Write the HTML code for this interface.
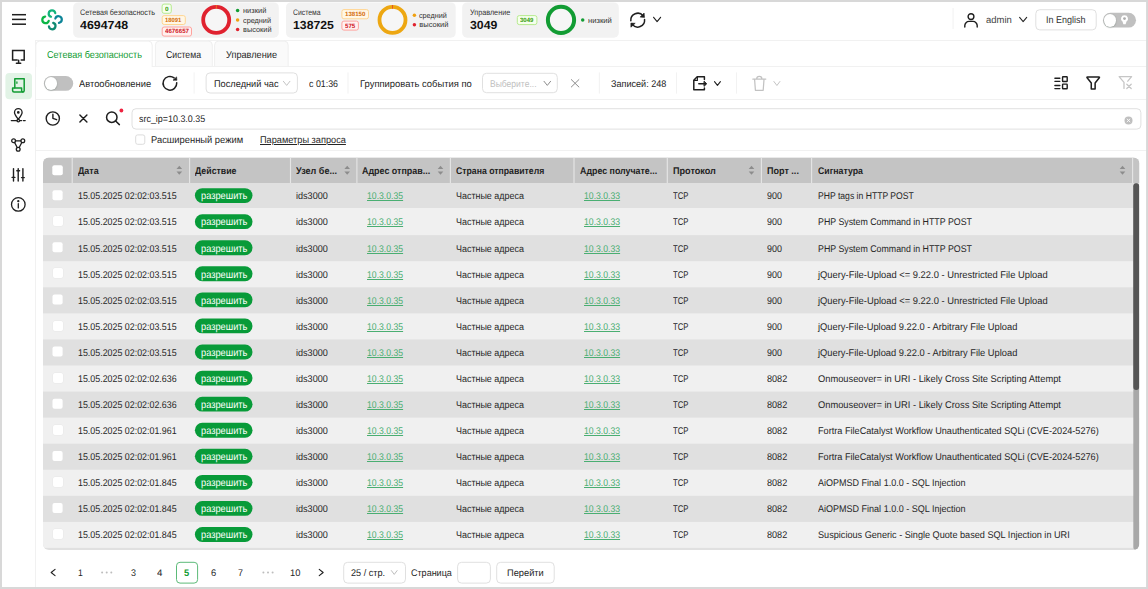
<!DOCTYPE html>
<html lang="ru"><head><meta charset="utf-8"><title>Сетевая безопасность</title>
<style>
html,body{margin:0;padding:0}
body{width:1148px;height:589px;position:relative;overflow:hidden;background:#fff;font-family:"Liberation Sans", sans-serif;color:#262626}
#r{position:absolute;left:0;top:0;width:1148px;height:589px;overflow:hidden}
#r div,#r svg,#r span{position:absolute}
#r span{white-space:nowrap;line-height:1;transform-origin:0 0;text-rendering:geometricPrecision}
#r svg{overflow:visible}
</style></head>
<body><div id="r">
<svg style="left:34px;top:39px" width="1115" height="3" viewBox="34 39 1115 3"><rect x="35" y="40" width="1113" height="0.9" fill="#f0f0f0"/></svg>
<svg style="left:34px;top:39px" width="3" height="551" viewBox="34 39 3 551"><rect x="35" y="40" width="0.9" height="549" fill="#f0f0f0"/></svg>
<svg style="left:11px;top:12px" width="16" height="5" viewBox="11 12 16 5"><rect x="12" y="13.95" width="14" height="1.5" fill="#1f1f1f"/></svg>
<svg style="left:11px;top:17px" width="16" height="5" viewBox="11 17 16 5"><rect x="12" y="18.65" width="14" height="1.5" fill="#1f1f1f"/></svg>
<svg style="left:11px;top:22px" width="16" height="4" viewBox="11 22 16 4"><rect x="12" y="23.45" width="14" height="1.5" fill="#1f1f1f"/></svg>
<svg style="left:34px;top:2px" width="36" height="36" viewBox="34 2 36 36"><g transform="translate(0 0)"><path d="M50.98 16.74A3.3 3.3 0 1 1 55.27 13.14" fill="none" stroke="#14b47c" stroke-width="2.25" stroke-linecap="round"/><path d="M48.74 20.82A3.3 3.3 0 1 1 45.14 16.53" fill="none" stroke="#0ab545" stroke-width="2.25" stroke-linecap="round"/><path d="M55.36 18.48A3.3 3.3 0 1 1 58.96 22.77" fill="none" stroke="#0d8598" stroke-width="2.25" stroke-linecap="round"/><path d="M53.22 22.86A3.3 3.3 0 1 1 48.93 26.46" fill="none" stroke="#118a72" stroke-width="2.25" stroke-linecap="round"/></g></svg>
<svg style="left:72px;top:1px" width="208" height="38" viewBox="72 1 208 38"><rect x="73.2" y="2.4" width="205.6" height="35.4" rx="5" fill="#f2f2f2"/></svg>
<svg style="left:285px;top:1px" width="172" height="38" viewBox="285 1 172 38"><rect x="286" y="2.4" width="169.7" height="35.4" rx="5" fill="#f2f2f2"/></svg>
<svg style="left:461px;top:1px" width="159" height="38" viewBox="461 1 159 38"><rect x="462.2" y="2.4" width="156.6" height="35.4" rx="5" fill="#f2f2f2"/></svg>
<svg style="left:160px;top:2px" width="13" height="13" viewBox="160 2 13 13"><rect x="162.1" y="4.1" width="9.2" height="9.2" rx="2" fill="#f6ffed" stroke="#b7eb8f" stroke-width="1"/></svg>
<svg style="left:160px;top:14px" width="27" height="12" viewBox="160 14 27 12"><rect x="162.2" y="15.6" width="23.1" height="8.9" rx="2" fill="#fff7e6" stroke="#ffd591" stroke-width="1"/></svg>
<svg style="left:160px;top:25px" width="33" height="13" viewBox="160 25 33 13"><rect x="162.2" y="27" width="29.3" height="9.1" rx="2" fill="#fff1f0" stroke="#ffa39e" stroke-width="1"/></svg>
<svg style="left:340px;top:8px" width="30" height="13" viewBox="340 8 30 13"><rect x="341.9" y="9.6" width="26.6" height="9.2" rx="2" fill="#fff7e6" stroke="#ffd591" stroke-width="1"/></svg>
<svg style="left:340px;top:19px" width="20" height="13" viewBox="340 19 20 13"><rect x="341.9" y="21.1" width="16.5" height="9" rx="2" fill="#fff1f0" stroke="#ffa39e" stroke-width="1"/></svg>
<svg style="left:515px;top:14px" width="24" height="13" viewBox="515 14 24 13"><rect x="517.3" y="15.6" width="19.6" height="9" rx="2" fill="#f6ffed" stroke="#b7eb8f" stroke-width="1"/></svg>
<svg style="left:198px;top:1px" width="37" height="37" viewBox="198 1 37 37"><g transform="translate(0 0)"><circle cx="216.2" cy="19.9" r="13.0" fill="#f6f6f6" stroke="#e0222f" stroke-width="3.8"/><rect x="215.89999999999998" y="4.999999999999998" width="0.6" height="3.8" fill="#f0a010"/></g></svg>
<svg style="left:374px;top:1px" width="37" height="37" viewBox="374 1 37 37"><g transform="translate(0 0)"><circle cx="392.5" cy="19.9" r="13.0" fill="#f6f6f6" stroke="#eda712" stroke-width="3.8"/><rect x="392.2" y="4.999999999999998" width="0.6" height="3.8" fill="#e0222f"/></g></svg>
<svg style="left:543px;top:1px" width="36" height="37" viewBox="543 1 36 37"><g transform="translate(0 0)"><circle cx="561.0" cy="19.9" r="13.1" fill="#f6f6f6" stroke="#129c33" stroke-width="4.0"/></g></svg>
<svg style="left:234px;top:7px" width="7" height="7" viewBox="234 7 7 7"><rect x="235.85" y="8.65" width="3.5" height="3.5" rx="1.75" fill="#129c33"/></svg>
<svg style="left:234px;top:17px" width="7" height="6" viewBox="234 17 7 6"><rect x="235.85" y="18.25" width="3.5" height="3.5" rx="1.75" fill="#f0a010"/></svg>
<svg style="left:234px;top:26px" width="7" height="7" viewBox="234 26 7 7"><rect x="235.85" y="27.65" width="3.5" height="3.5" rx="1.75" fill="#e0222f"/></svg>
<svg style="left:411px;top:12px" width="7" height="6" viewBox="411 12 7 6"><rect x="412.65" y="13.45" width="3.5" height="3.5" rx="1.75" fill="#f0a010"/></svg>
<svg style="left:411px;top:22px" width="7" height="6" viewBox="411 22 7 6"><rect x="412.65" y="23.05" width="3.5" height="3.5" rx="1.75" fill="#e0222f"/></svg>
<svg style="left:579px;top:17px" width="7" height="6" viewBox="579 17 7 6"><rect x="580.95" y="18.35" width="3.5" height="3.5" rx="1.75" fill="#129c33"/></svg>
<svg style="left:623px;top:6px" width="30" height="30" viewBox="623 6 30 30"><g transform="translate(0 0)"><g fill="none" stroke="#1f1f1f" stroke-width="1.5" stroke-linecap="round"><path d="M630.83 20.75A6.9 6.9 0 0 1 643.14 15.90"/><path d="M644.57 19.55A6.9 6.9 0 0 1 632.26 24.40"/></g><path d="M644.1 13.0L644.5 17.4L640.1 17.1Z" fill="#1f1f1f" stroke="#1f1f1f" stroke-width=".6" stroke-linejoin="round"/><path d="M630.9 23.1L630.9 27.2L635.2 23.3Z" fill="#1f1f1f" stroke="#1f1f1f" stroke-width=".6" stroke-linejoin="round"/></g></svg>
<svg style="left:650px;top:14px" width="14" height="11" viewBox="650 14 14 11"><g transform="translate(653.6 17.3)"><path d="M0 0L3.50 4.30L7.00 0" fill="none" stroke="#1f1f1f" stroke-width="1.1" stroke-linecap="round" stroke-linejoin="round"/></g></svg>
<svg style="left:951px;top:7px" width="4" height="23" viewBox="951 7 4 23"><rect x="952.6" y="8" width="0.9" height="21" fill="#f0f0f0"/></svg>
<svg style="left:962px;top:11px" width="18" height="19" viewBox="962 11 18 19"><g transform="translate(964 13)"><g fill="none" stroke="#1f1f1f" stroke-width="1.4" stroke-linecap="round"><circle cx="7" cy="3.6" r="2.9"/><path d="M0.8 14V12.6A4.2 4.2 0 0 1 5 8.4H9A4.2 4.2 0 0 1 13.2 12.6V14"/></g></g></svg>
<svg style="left:1016px;top:14px" width="14" height="11" viewBox="1016 14 14 11"><g transform="translate(1019.6 17.4)"><path d="M0 0L3.55 4.30L7.10 0" fill="none" stroke="#262626" stroke-width="1.05" stroke-linecap="round" stroke-linejoin="round"/></g></svg>
<svg style="left:1034px;top:8px" width="64" height="24" viewBox="1034 8 64 24"><rect x="1035.8" y="9.7" width="60.4" height="20.2" rx="4" fill="#fff" stroke="#e0e0e0" stroke-width="1"/></svg>
<svg style="left:1102px;top:11px" width="35" height="18" viewBox="1102 11 35 18"><rect x="1103" y="12.7" width="33" height="14.9" rx="7.45" fill="#c0c0c0"/></svg>
<div style="left:1103.70px;top:13.70px;width:12.60px;height:13.00px;background:#fff;border-radius:50%;box-shadow:0 .5px 1.5px rgba(0,40,20,.3)"></div>
<svg style="left:1118px;top:13px" width="13" height="15" viewBox="1118 13 13 15"><g transform="translate(1120.9 15.1)"><path d="M3.6 0.1A3.5 3.5 0 0 0 1.6 6.5L2.5 9.1H4.7L5.6 6.5A3.5 3.5 0 0 0 3.6 0.1Z" fill="#fff"/><circle cx="3.6" cy="3.5" r="1.4" fill="#adadad"/></g></svg>
<svg style="left:4px;top:71px" width="29" height="30" viewBox="4 71 29 30"><rect x="5.4" y="72.9" width="26.6" height="26.4" rx="4" fill="#e2f3e6"/></svg>
<svg style="left:9px;top:47px" width="18" height="19" viewBox="9 47 18 19"><g transform="translate(11.8 49.8)"><g fill="none" stroke="#1f1f1f" stroke-width="1.5" stroke-linejoin="round" stroke-linecap="round"><path d="M5.4 10.2H0.8V0.8H12.4V10.2H9.4" stroke-linejoin="miter"/><path d="M6.8 10.4V13.4M4.6 13.5H8.9"/></g></g></svg>
<svg style="left:9px;top:76px" width="19" height="19" viewBox="9 76 19 19"><g transform="translate(11.8 78) scale(1.0000 1.0278)"><g fill="none" stroke="#129c33" stroke-width="1.5" stroke-linejoin="round" stroke-linecap="round"><path d="M3 9.6V0.8H12.4V12.2A1.4 1.4 0 0 1 11 13.6"/><path d="M0.8 9.8H9.8V12.2A1.4 1.4 0 0 0 11.2 13.6H2.2A1.4 1.4 0 0 1 0.8 12.2Z"/><path d="M5.1 3.9V5.1" stroke-width="1.3"/></g></g></svg>
<svg style="left:8px;top:106px" width="20" height="19" viewBox="8 106 20 19"><g transform="translate(10.6 108)"><g fill="none" stroke="#1f1f1f" stroke-width="1.3" stroke-linecap="round" stroke-linejoin="round"><path d="M7.7 11.2C5.6 8.6 3.9 6.6 3.9 4.5A3.8 3.8 0 0 1 11.5 4.5C11.5 6.6 9.8 8.6 7.7 11.2Z"/><circle cx="7.7" cy="4.4" r="0.7" fill="#1f1f1f"/><circle cx="7.7" cy="12.6" r="1.3"/><path d="M0.7 12.6H6.3M9.1 12.6H11M12.8 12.6H14.6"/></g></g></svg>
<svg style="left:9px;top:136px" width="19" height="19" viewBox="9 136 19 19"><g transform="translate(11 138)"><g fill="none" stroke="#1f1f1f" stroke-width="1.3" stroke-linecap="round"><circle cx="2.6" cy="2.8" r="1.9"/><circle cx="11.8" cy="2.8" r="1.9"/><circle cx="7.2" cy="11.2" r="1.9"/><path d="M4.5 2.8H9.9M3.6 4.5L6.2 9.5M10.8 4.5L8.2 9.5"/></g></g></svg>
<svg style="left:9px;top:165px" width="18" height="19" viewBox="9 165 18 19"><g transform="translate(11.5 167.8)"><g fill="none" stroke="#1f1f1f" stroke-width="1.4" stroke-linecap="round"><path d="M2 0.8V13.2M6.7 0.8V13.2M11.4 0.8V13.2M0.6 9.6H3.4M5.3 3.0H8.1M10 9.8H12.8"/></g></g></svg>
<svg style="left:8px;top:194px" width="20" height="20" viewBox="8 194 20 20"><g transform="translate(10.8 196.9)"><g fill="none" stroke="#1f1f1f" stroke-width="1.3" stroke-linecap="round"><circle cx="7.5" cy="7.5" r="6.8"/><path d="M7.5 6.8V11"/><circle cx="7.5" cy="4.3" r="0.5" fill="#1f1f1f"/></g></g></svg>
<svg style="left:34px;top:65px" width="1115" height="3" viewBox="34 65 1115 3"><rect x="35" y="66" width="1113" height="0.9" fill="#f0f0f0"/></svg>
<svg style="left:34px;top:39px" width="120" height="29" viewBox="34 39 120 29"><path d="M35.8 67V45.1A4.0 4.0 0 0 1 39.8 41.1H148.2A4.0 4.0 0 0 1 152.2 45.1V67" fill="#fff" stroke="#efefef" stroke-width="1"/></svg>
<svg style="left:153px;top:39px" width="61" height="29" viewBox="153 39 61 29"><path d="M155.4 66.1V45.1A4.0 4.0 0 0 1 159.4 41.1H208.3A4.0 4.0 0 0 1 212.3 45.1V66.1" fill="#fafafa" stroke="#efefef" stroke-width="1"/></svg>
<svg style="left:213px;top:39px" width="77" height="29" viewBox="213 39 77 29"><path d="M214.6 66.1V45.1A4.0 4.0 0 0 1 218.6 41.1H284.2A4.0 4.0 0 0 1 288.2 45.1V66.1" fill="#fafafa" stroke="#efefef" stroke-width="1"/></svg>
<svg style="left:34px;top:98px" width="1115" height="3" viewBox="34 98 1115 3"><rect x="35" y="99" width="1113" height="0.9" fill="#f0f0f0"/></svg>
<svg style="left:42px;top:75px" width="33" height="17" viewBox="42 75 33 17"><rect x="43.9" y="76" width="29.3" height="14.8" rx="7.4" fill="#c0c0c0"/></svg>
<div style="left:44.70px;top:76.80px;width:12.60px;height:12.80px;background:#fff;border-radius:50%;box-shadow:0 .5px 1.5px rgba(0,40,20,.3)"></div>
<svg style="left:158px;top:71px" width="24" height="24" viewBox="158 71 24 24"><g transform="translate(0 0)"><path d="M176.73 82.82A6.85 6.85 0 1 1 174.12 77.90" fill="none" stroke="#1f1f1f" stroke-width="1.5" stroke-linecap="round"/><path d="M176.6 76.9L176.9 80.3L173.0 80.2Z" fill="#1f1f1f" stroke="#1f1f1f" stroke-width=".6" stroke-linejoin="round"/></g></svg>
<svg style="left:192px;top:71px" width="4" height="24" viewBox="192 71 4 24"><rect x="193.65" y="72.4" width="0.9" height="21.2" fill="#f0f0f0"/></svg>
<svg style="left:346px;top:71px" width="4" height="24" viewBox="346 71 4 24"><rect x="347.55" y="72.4" width="0.9" height="21.2" fill="#f0f0f0"/></svg>
<svg style="left:597px;top:71px" width="4" height="24" viewBox="597 71 4 24"><rect x="598.85" y="72.4" width="0.9" height="21.2" fill="#f0f0f0"/></svg>
<svg style="left:674px;top:71px" width="4" height="24" viewBox="674 71 4 24"><rect x="675.95" y="72.4" width="0.9" height="21.2" fill="#f0f0f0"/></svg>
<svg style="left:734px;top:71px" width="4" height="24" viewBox="734 71 4 24"><rect x="735.95" y="72.4" width="0.9" height="21.2" fill="#f0f0f0"/></svg>
<svg style="left:204px;top:71px" width="95" height="24" viewBox="204 71 95 24"><rect x="206.1" y="72.9" width="91.3" height="20.1" rx="4" fill="#fff" stroke="#e0e0e0" stroke-width="1"/></svg>
<svg style="left:280px;top:78px" width="13" height="11" viewBox="280 78 13 11"><g transform="translate(283.4 81.3)"><path d="M0 0L3.25 4.10L6.50 0" fill="none" stroke="#c4c4c4" stroke-width="1.0" stroke-linecap="round" stroke-linejoin="round"/></g></svg>
<svg style="left:481px;top:71px" width="78" height="24" viewBox="481 71 78 24"><rect x="482.5" y="73.3" width="74.8" height="19.4" rx="4" fill="#fff" stroke="#e0e0e0" stroke-width="1"/></svg>
<svg style="left:541px;top:78px" width="13" height="11" viewBox="541 78 13 11"><g transform="translate(544 81.3)"><path d="M0 0L3.30 4.10L6.60 0" fill="none" stroke="#8c8c8c" stroke-width="1.0" stroke-linecap="round" stroke-linejoin="round"/></g></svg>
<svg style="left:568px;top:76px" width="14" height="14" viewBox="568 76 14 14"><g transform="translate(571.3 79.6)"><path d="M0 0L7.60 7.40M7.60 0L0 7.40" stroke="#8c8c8c" stroke-width="1.0" stroke-linecap="round"/></g></svg>
<svg style="left:691px;top:74px" width="19" height="19" viewBox="691 74 19 19"><g transform="translate(693 76)"><g fill="none" stroke="#1f1f1f" stroke-width="1.5" stroke-linejoin="round" stroke-linecap="round"><path d="M11.4 3.4V0.8H4.2L0.8 4.2V13.8H11.4V12"/><path d="M1 4.4H4.4V1" stroke-width="1.1"/><path d="M5.8 7.8H12.4"/><path d="M11.3 5.5L13.7 7.8L11.3 10.1Z" fill="#1f1f1f" stroke-width="1"/></g></g></svg>
<svg style="left:711px;top:78px" width="13" height="11" viewBox="711 78 13 11"><g transform="translate(714.5 81.7)"><path d="M0 0L2.95 3.60L5.90 0" fill="none" stroke="#1f1f1f" stroke-width="1.1" stroke-linecap="round" stroke-linejoin="round"/></g></svg>
<svg style="left:750px;top:73px" width="18" height="20" viewBox="750 73 18 20"><g transform="translate(752.6 75.9)"><g fill="none" stroke="#c2c2c2" stroke-width="1.25" stroke-linejoin="round" stroke-linecap="round"><path d="M0.2 3.2H13.2M4.1 3A2.6 2.6 0 0 1 9.3 3"/><path d="M2 3.6L2.8 14.4H10.6L11.4 3.6"/></g></g></svg>
<svg style="left:770px;top:78px" width="13" height="11" viewBox="770 78 13 11"><g transform="translate(773.9 81.5)"><path d="M0 0L3.00 4.00L6.00 0" fill="none" stroke="#c4c4c4" stroke-width="1.0" stroke-linecap="round" stroke-linejoin="round"/></g></svg>
<svg style="left:1052px;top:74px" width="18" height="18" viewBox="1052 74 18 18"><g transform="translate(1054.2 76.1) scale(1.0074 1.0075)"><g fill="none" stroke="#1f1f1f" stroke-width="1.4" stroke-linecap="round" stroke-linejoin="round"><path d="M0.7 2.1H5.6M0.7 5.2H5.6M0.7 9.3H5.6M0.7 12.4H5.6"/><rect x="8.3" y="0.7" width="4.6" height="4.6" rx=".5"/><rect x="8.3" y="8" width="4.6" height="4.6" rx=".5"/></g></g></svg>
<svg style="left:1084px;top:74px" width="19" height="18" viewBox="1084 74 19 18"><g transform="translate(1086.2 76.1) scale(1.0145 1.0148)"><path d="M1.3 0.8H12.5Q13.4 0.8 12.9 1.6L8.8 6.8V12.7H5V6.8L0.9 1.6Q0.4 0.8 1.3 0.8Z" fill="none" stroke="#1f1f1f" stroke-width="1.5" stroke-linejoin="round"/></g></svg>
<svg style="left:1116px;top:74px" width="19" height="18" viewBox="1116 74 19 18"><g transform="translate(1118.4 76)"><g fill="none" stroke="#c6c6c6" stroke-width="1.3" stroke-linejoin="round" stroke-linecap="round"><path d="M5.6 12.4V6.4L0.7 0.7H13.2L9.4 5.2"/><path d="M8.4 8.2L12.8 12.5M12.8 8.2L8.4 12.5"/></g></g></svg>
<svg style="left:34px;top:149px" width="1115" height="3" viewBox="34 149 1115 3"><rect x="35" y="150" width="1113" height="0.9" fill="#f0f0f0"/></svg>
<svg style="left:43px;top:109px" width="20" height="19" viewBox="43 109 20 19"><g transform="translate(45.4 111.1)"><g fill="none" stroke="#1f1f1f" stroke-width="1.4" stroke-linecap="round" stroke-linejoin="round"><circle cx="7.4" cy="7.4" r="6.6"/><path d="M7.5 3.2V7.2L11.2 8.6"/></g></g></svg>
<svg style="left:76px;top:112px" width="14" height="13" viewBox="76 112 14 13"><g transform="translate(79.9 115.1)"><path d="M0 0L7.00 6.90M7.00 0L0 6.90" stroke="#1f1f1f" stroke-width="1.45" stroke-linecap="round"/></g></svg>
<svg style="left:103px;top:109px" width="20" height="20" viewBox="103 109 20 20"><g transform="translate(105.7 111.1) scale(1.0135 1.0135)"><g fill="none" stroke="#1f1f1f" stroke-width="1.5" stroke-linecap="round"><circle cx="6" cy="6" r="5.15"/><path d="M9.8 9.8L13.5 13.3"/></g></g></svg>
<svg style="left:118px;top:107px" width="7" height="7" viewBox="118 107 7 7"><rect x="119.5" y="108.6" width="3.8" height="3.8" rx="1.9" fill="#ee2340"/></svg>
<svg style="left:130px;top:107px" width="1013" height="24" viewBox="130 107 1013 24"><rect x="132" y="108.7" width="1008.9" height="20.4" rx="4" fill="#fff" stroke="#e0e0e0" stroke-width="1"/></svg>
<svg style="left:1122px;top:114px" width="13" height="13" viewBox="1122 114 13 13"><g transform="translate(1124.5 116.4)"><circle cx="4" cy="4" r="4" fill="#bfbfbf"/><path d="M2.6 2.6L5.4 5.4M5.4 2.6L2.6 5.4" stroke="#fff" stroke-width=".9" stroke-linecap="round"/></g></svg>
<svg style="left:134px;top:133px" width="13" height="13" viewBox="134 133 13 13"><rect x="135.7" y="134.9" width="9.1" height="9.4" rx="2" fill="#fff" stroke="#dcdcdc" stroke-width="1"/></svg>
<svg style="left:42px;top:156px" width="1099" height="395" viewBox="42 156 1099 395"><defs><clipPath id="tc"><rect x="43.0" y="157.5" width="1096.4" height="392.5" rx="6"/></clipPath></defs><g clip-path="url(#tc)"><rect x="43.0" y="157.5" width="1096.4" height="392.5" fill="#e0e0e0"/><rect x="43.0" y="157.5" width="1096.4" height="25.5" fill="#c4c4c4"/><rect x="43.0" y="208" width="1096.4" height="27.14" fill="#f0f0f0"/><rect x="43.0" y="261.21" width="1096.4" height="26.07" fill="#f0f0f0"/><rect x="43.0" y="313.35" width="1096.4" height="26.07" fill="#f0f0f0"/><rect x="43.0" y="365.49" width="1096.4" height="26.07" fill="#f0f0f0"/><rect x="43.0" y="417.63" width="1096.4" height="26.07" fill="#f0f0f0"/><rect x="43.0" y="469.77" width="1096.4" height="26.07" fill="#f0f0f0"/><rect x="43.0" y="521.91" width="1096.4" height="25.99" fill="#f0f0f0"/><rect x="71.65" y="157.5" width="1.1" height="25.5" fill="#e6e6e6"/><rect x="189.05" y="157.5" width="1.1" height="25.5" fill="#e6e6e6"/><rect x="289.95" y="157.5" width="1.1" height="25.5" fill="#e6e6e6"/><rect x="356.35" y="157.5" width="1.1" height="25.5" fill="#e6e6e6"/><rect x="449.85" y="157.5" width="1.1" height="25.5" fill="#e6e6e6"/><rect x="573.45" y="157.5" width="1.1" height="25.5" fill="#e6e6e6"/><rect x="666.75" y="157.5" width="1.1" height="25.5" fill="#e6e6e6"/><rect x="760.85" y="157.5" width="1.1" height="25.5" fill="#e6e6e6"/><rect x="811.05" y="157.5" width="1.1" height="25.5" fill="#e6e6e6"/><rect x="1132.05" y="157.5" width="1.1" height="25.5" fill="#e6e6e6"/><rect x="1133.3" y="183.3" width="5.9" height="366.7" rx="2.95" fill="#a8a8a8"/><rect x="1133.3" y="183.3" width="5.9" height="206.7" rx="2.95" fill="#555"/></g></svg>
<svg style="left:174px;top:163px" width="11" height="14" viewBox="174 163 11 14"><g transform="translate(176.3 165.8)"><path d="M3 0L5.8 3.3H0.2Z" fill="#8c8c8c"/><path d="M3 9L5.8 5.7H0.2Z" fill="#8c8c8c"/></g></svg>
<svg style="left:342px;top:163px" width="11" height="14" viewBox="342 163 11 14"><g transform="translate(344.2 165.8)"><path d="M3 0L5.8 3.3H0.2Z" fill="#8c8c8c"/><path d="M3 9L5.8 5.7H0.2Z" fill="#8c8c8c"/></g></svg>
<svg style="left:435px;top:163px" width="11" height="14" viewBox="435 163 11 14"><g transform="translate(437.5 165.8)"><path d="M3 0L5.8 3.3H0.2Z" fill="#8c8c8c"/><path d="M3 9L5.8 5.7H0.2Z" fill="#8c8c8c"/></g></svg>
<svg style="left:746px;top:163px" width="11" height="14" viewBox="746 163 11 14"><g transform="translate(748.5 165.8)"><path d="M3 0L5.8 3.3H0.2Z" fill="#8c8c8c"/><path d="M3 9L5.8 5.7H0.2Z" fill="#8c8c8c"/></g></svg>
<svg style="left:1117px;top:163px" width="11" height="14" viewBox="1117 163 11 14"><g transform="translate(1119.5 165.8)"><path d="M3 0L5.8 3.3H0.2Z" fill="#8c8c8c"/><path d="M3 9L5.8 5.7H0.2Z" fill="#8c8c8c"/></g></svg>
<svg style="left:51px;top:164px" width="13" height="13" viewBox="51 164 13 13"><rect x="52.3" y="165.2" width="10.5" height="10.1" rx="2" fill="#fff"/></svg>
<svg style="left:51px;top:189px" width="13" height="13" viewBox="51 189 13 13"><rect x="52.5" y="190.2" width="10.1" height="10" rx="2" fill="#fff"/></svg>
<svg style="left:193px;top:187px" width="61" height="17" viewBox="193 187 61 17"><rect x="194.9" y="188.15" width="57.6" height="14.85" rx="7.43" fill="#089b39"/></svg>
<div style="left:52.50px;top:216.27px;width:10.10px;height:10.00px;background:#fff;border-radius:2px;box-shadow:0 0 0 .5px #e8e8e8"></div>
<svg style="left:193px;top:213px" width="61" height="18" viewBox="193 213 61 18"><rect x="194.9" y="214.22" width="57.6" height="14.85" rx="7.43" fill="#089b39"/></svg>
<svg style="left:51px;top:241px" width="13" height="13" viewBox="51 241 13 13"><rect x="52.5" y="242.34" width="10.1" height="10" rx="2" fill="#fff"/></svg>
<svg style="left:193px;top:239px" width="61" height="18" viewBox="193 239 61 18"><rect x="194.9" y="240.29" width="57.6" height="14.85" rx="7.43" fill="#089b39"/></svg>
<div style="left:52.50px;top:268.41px;width:10.10px;height:10.00px;background:#fff;border-radius:2px;box-shadow:0 0 0 .5px #e8e8e8"></div>
<svg style="left:193px;top:265px" width="61" height="18" viewBox="193 265 61 18"><rect x="194.9" y="266.36" width="57.6" height="14.85" rx="7.43" fill="#089b39"/></svg>
<svg style="left:51px;top:293px" width="13" height="13" viewBox="51 293 13 13"><rect x="52.5" y="294.48" width="10.1" height="10" rx="2" fill="#fff"/></svg>
<svg style="left:193px;top:291px" width="61" height="18" viewBox="193 291 61 18"><rect x="194.9" y="292.43" width="57.6" height="14.85" rx="7.43" fill="#089b39"/></svg>
<div style="left:52.50px;top:320.55px;width:10.10px;height:10.00px;background:#fff;border-radius:2px;box-shadow:0 0 0 .5px #e8e8e8"></div>
<svg style="left:193px;top:317px" width="61" height="18" viewBox="193 317 61 18"><rect x="194.9" y="318.5" width="57.6" height="14.85" rx="7.43" fill="#089b39"/></svg>
<svg style="left:51px;top:345px" width="13" height="13" viewBox="51 345 13 13"><rect x="52.5" y="346.62" width="10.1" height="10" rx="2" fill="#fff"/></svg>
<svg style="left:193px;top:343px" width="61" height="18" viewBox="193 343 61 18"><rect x="194.9" y="344.57" width="57.6" height="14.85" rx="7.43" fill="#089b39"/></svg>
<div style="left:52.50px;top:372.69px;width:10.10px;height:10.00px;background:#fff;border-radius:2px;box-shadow:0 0 0 .5px #e8e8e8"></div>
<svg style="left:193px;top:369px" width="61" height="18" viewBox="193 369 61 18"><rect x="194.9" y="370.64" width="57.6" height="14.85" rx="7.43" fill="#089b39"/></svg>
<svg style="left:51px;top:397px" width="13" height="13" viewBox="51 397 13 13"><rect x="52.5" y="398.76" width="10.1" height="10" rx="2" fill="#fff"/></svg>
<svg style="left:193px;top:395px" width="61" height="18" viewBox="193 395 61 18"><rect x="194.9" y="396.71" width="57.6" height="14.85" rx="7.43" fill="#089b39"/></svg>
<div style="left:52.50px;top:424.83px;width:10.10px;height:10.00px;background:#fff;border-radius:2px;box-shadow:0 0 0 .5px #e8e8e8"></div>
<svg style="left:193px;top:421px" width="61" height="18" viewBox="193 421 61 18"><rect x="194.9" y="422.78" width="57.6" height="14.85" rx="7.43" fill="#089b39"/></svg>
<svg style="left:51px;top:449px" width="13" height="13" viewBox="51 449 13 13"><rect x="52.5" y="450.9" width="10.1" height="10" rx="2" fill="#fff"/></svg>
<svg style="left:193px;top:447px" width="61" height="18" viewBox="193 447 61 18"><rect x="194.9" y="448.85" width="57.6" height="14.85" rx="7.43" fill="#089b39"/></svg>
<div style="left:52.50px;top:476.97px;width:10.10px;height:10.00px;background:#fff;border-radius:2px;box-shadow:0 0 0 .5px #e8e8e8"></div>
<svg style="left:193px;top:473px" width="61" height="18" viewBox="193 473 61 18"><rect x="194.9" y="474.92" width="57.6" height="14.85" rx="7.43" fill="#089b39"/></svg>
<svg style="left:51px;top:502px" width="13" height="13" viewBox="51 502 13 13"><rect x="52.5" y="503.04" width="10.1" height="10" rx="2" fill="#fff"/></svg>
<svg style="left:193px;top:499px" width="61" height="18" viewBox="193 499 61 18"><rect x="194.9" y="500.99" width="57.6" height="14.85" rx="7.43" fill="#089b39"/></svg>
<div style="left:52.50px;top:529.11px;width:10.10px;height:10.00px;background:#fff;border-radius:2px;box-shadow:0 0 0 .5px #e8e8e8"></div>
<svg style="left:193px;top:526px" width="61" height="17" viewBox="193 526 61 17"><rect x="194.9" y="527.06" width="57.6" height="14.85" rx="7.42" fill="#089b39"/></svg>
<svg style="left:48px;top:566px" width="11" height="13" viewBox="48 566 11 13"><g transform="translate(51.15 569.4)"><path d="M3.9 0L0 3.1L3.9 6.2" fill="none" stroke="#1f1f1f" stroke-width="1.15" stroke-linecap="round" stroke-linejoin="round"/></g></svg>
<svg style="left:175px;top:560px" width="25" height="25" viewBox="175 560 25 25"><rect x="176.5" y="562.3" width="21.1" height="20.8" rx="3.5" fill="#fff" stroke="#5cba78" stroke-width="1"/></svg>
<svg style="left:100px;top:570px" width="5" height="5" viewBox="100 570 5 5"><rect x="101.1" y="571.5" width="2" height="2" rx="1" fill="#bdbdbd"/></svg>
<svg style="left:104px;top:570px" width="5" height="5" viewBox="104 570 5 5"><rect x="105.7" y="571.5" width="2" height="2" rx="1" fill="#bdbdbd"/></svg>
<svg style="left:109px;top:570px" width="5" height="5" viewBox="109 570 5 5"><rect x="110.3" y="571.5" width="2" height="2" rx="1" fill="#bdbdbd"/></svg>
<svg style="left:261px;top:570px" width="5" height="5" viewBox="261 570 5 5"><rect x="262.4" y="571.5" width="2" height="2" rx="1" fill="#bdbdbd"/></svg>
<svg style="left:266px;top:570px" width="4" height="5" viewBox="266 570 4 5"><rect x="267" y="571.5" width="2" height="2" rx="1" fill="#bdbdbd"/></svg>
<svg style="left:270px;top:570px" width="5" height="5" viewBox="270 570 5 5"><rect x="271.6" y="571.5" width="2" height="2" rx="1" fill="#bdbdbd"/></svg>
<svg style="left:316px;top:566px" width="11" height="13" viewBox="316 566 11 13"><g transform="translate(319.25 569.4)"><path d="M0 0L3.9 3.1L0 6.2" fill="none" stroke="#1f1f1f" stroke-width="1.15" stroke-linecap="round" stroke-linejoin="round"/></g></svg>
<svg style="left:342px;top:560px" width="65" height="25" viewBox="342 560 65 25"><rect x="343.7" y="562.3" width="61.8" height="20.8" rx="4" fill="#fff" stroke="#e0e0e0" stroke-width="1"/></svg>
<svg style="left:388px;top:567px" width="13" height="11" viewBox="388 567 13 11"><g transform="translate(391.4 570.6)"><path d="M0 0L2.85 3.80L5.70 0" fill="none" stroke="#bdbdbd" stroke-width="1.0" stroke-linecap="round" stroke-linejoin="round"/></g></svg>
<svg style="left:456px;top:560px" width="36" height="25" viewBox="456 560 36 25"><rect x="457.6" y="562.3" width="32.8" height="20.8" rx="4" fill="#fff" stroke="#e0e0e0" stroke-width="1"/></svg>
<svg style="left:495px;top:560px" width="61" height="25" viewBox="495 560 61 25"><rect x="496.7" y="562.3" width="57.5" height="20.8" rx="4" fill="#fff" stroke="#e0e0e0" stroke-width="1"/></svg>
<span style="left:80.00px;top:9px;font-size:8.0px;color:#333;transform:scaleX(0.8990);">Сетевая безопасность</span>
<span style="left:80.10px;top:20px;font-size:11.7px;font-weight:700;color:#111;transform:scaleX(1.0590);">4694748</span>
<span style="left:293.40px;top:9px;font-size:8.0px;color:#333;transform:scaleX(0.8535);">Система</span>
<span style="left:293.40px;top:20px;font-size:11.7px;font-weight:700;color:#111;transform:scaleX(1.0483);">138725</span>
<span style="left:469.80px;top:9px;font-size:8.0px;color:#333;transform:scaleX(0.9037);">Управление</span>
<span style="left:469.80px;top:20px;font-size:11.7px;font-weight:700;color:#111;transform:scaleX(1.0532);">3049</span>
<span style="left:165.20px;top:7px;font-size:6.1px;font-weight:700;color:#389e0d;transform:scaleX(1.0618);">0</span>
<span style="left:165.30px;top:18px;font-size:6.1px;font-weight:700;color:#d46b08;transform:scaleX(0.9615);">18091</span>
<span style="left:164.90px;top:29px;font-size:6.1px;font-weight:700;color:#cf1322;transform:scaleX(1.0112);">4676657</span>
<span style="left:345.00px;top:12px;font-size:6.1px;font-weight:700;color:#d46b08;">138150</span>
<span style="left:345.00px;top:24px;font-size:6.1px;font-weight:700;color:#cf1322;transform:scaleX(1.0126);">575</span>
<span style="left:520.40px;top:18px;font-size:6.1px;font-weight:700;color:#389e0d;transform:scaleX(0.9954);">3049</span>
<span style="left:242.90px;top:7px;font-size:7.5px;color:#333;transform:scaleX(0.9941);">низкий</span>
<span style="left:242.90px;top:17px;font-size:7.5px;color:#333;transform:scaleX(0.9713);">средний</span>
<span style="left:242.90px;top:26px;font-size:7.5px;color:#333;transform:scaleX(0.9812);">высокий</span>
<span style="left:419.30px;top:12px;font-size:7.5px;color:#333;transform:scaleX(0.9609);">средний</span>
<span style="left:419.30px;top:21px;font-size:7.5px;color:#333;">высокий</span>
<span style="left:587.60px;top:17px;font-size:7.5px;color:#333;transform:scaleX(1.0197);">низкий</span>
<span style="left:986.00px;top:16px;font-size:9.8px;color:#434343;transform:scaleX(0.9667);">admin</span>
<span style="left:1046.00px;top:16px;font-size:9.8px;color:#333;transform:scaleX(0.9179);">In English</span>
<span style="left:47.00px;top:51px;font-size:10.0px;color:#129c33;transform:scaleX(0.9100);">Сетевая безопасность</span>
<span style="left:166.20px;top:51px;font-size:10.0px;transform:scaleX(0.8689);">Система</span>
<span style="left:226.00px;top:51px;font-size:10.0px;transform:scaleX(0.9174);">Управление</span>
<span style="left:78.90px;top:80px;font-size:9.7px;transform:scaleX(0.9625);">Автообновление</span>
<span style="left:213.70px;top:80px;font-size:9.7px;transform:scaleX(0.9509);">Последний час</span>
<span style="left:308.80px;top:80px;font-size:9.7px;transform:scaleX(0.9125);">с 01:36</span>
<span style="left:359.80px;top:80px;font-size:9.7px;transform:scaleX(0.9707);">Группировать события по</span>
<span style="left:490.40px;top:80px;font-size:9.7px;color:#bfbfbf;transform:scaleX(0.8800);">Выберите...</span>
<span style="left:610.50px;top:80px;font-size:9.7px;transform:scaleX(0.9375);">Записей: 248</span>
<span style="left:139.10px;top:115px;font-size:9.6px;transform:scaleX(0.9295);">src_ip=10.3.0.35</span>
<span style="left:151.30px;top:136px;font-size:9.8px;transform:scaleX(0.9555);">Расширенный режим</span>
<span style="left:259.60px;top:136px;font-size:9.8px;transform:scaleX(0.9394);text-decoration:underline;text-underline-offset:1px">Параметры запроса</span>
<span style="left:77.70px;top:167px;font-size:9.7px;font-weight:700;color:#1f1f1f;transform:scaleX(0.9232);">Дата</span>
<span style="left:195.20px;top:167px;font-size:9.7px;font-weight:700;color:#1f1f1f;transform:scaleX(0.9062);">Действие</span>
<span style="left:295.80px;top:167px;font-size:9.7px;font-weight:700;color:#1f1f1f;transform:scaleX(0.9335);">Узел бе...</span>
<span style="left:362.10px;top:167px;font-size:9.7px;font-weight:700;color:#1f1f1f;transform:scaleX(0.9214);">Адрес отправ...</span>
<span style="left:456.20px;top:167px;font-size:9.7px;font-weight:700;color:#1f1f1f;transform:scaleX(0.8973);">Страна отправителя</span>
<span style="left:579.80px;top:167px;font-size:9.7px;font-weight:700;color:#1f1f1f;transform:scaleX(0.9118);">Адрес получате...</span>
<span style="left:673.30px;top:167px;font-size:9.7px;font-weight:700;color:#1f1f1f;transform:scaleX(0.9396);">Протокол</span>
<span style="left:767.40px;top:167px;font-size:9.7px;font-weight:700;color:#1f1f1f;transform:scaleX(0.9331);">Порт ...</span>
<span style="left:817.60px;top:167px;font-size:9.7px;font-weight:700;color:#1f1f1f;transform:scaleX(0.9019);">Сигнатура</span>
<span style="left:77.70px;top:192px;font-size:9.8px;transform:scaleX(0.9048);">15.05.2025 02:02:03.515</span>
<span style="left:200.80px;top:192px;font-size:10.4px;color:#fff;transform:scaleX(0.8910);">разрешить</span>
<span style="left:295.80px;top:192px;font-size:9.8px;transform:scaleX(0.9264);">ids3000</span>
<span style="left:366.80px;top:192px;font-size:9.8px;color:#4aae72;transform:scaleX(0.8835);text-decoration:underline;text-underline-offset:1px">10.3.0.35</span>
<span style="left:456.20px;top:192px;font-size:9.8px;transform:scaleX(0.9126);">Частные адреса</span>
<span style="left:584.20px;top:192px;font-size:9.8px;color:#4aae72;transform:scaleX(0.8835);text-decoration:underline;text-underline-offset:1px">10.3.0.33</span>
<span style="left:673.30px;top:192px;font-size:9.8px;transform:scaleX(0.7904);">TCP</span>
<span style="left:767.40px;top:192px;font-size:9.8px;transform:scaleX(0.9108);">900</span>
<span style="left:817.70px;top:192px;font-size:9.8px;transform:scaleX(0.8783);">PHP tags in HTTP POST</span>
<span style="left:77.70px;top:218px;font-size:9.8px;transform:scaleX(0.9048);">15.05.2025 02:02:03.515</span>
<span style="left:200.80px;top:218px;font-size:10.4px;color:#fff;transform:scaleX(0.8910);">разрешить</span>
<span style="left:295.80px;top:218px;font-size:9.8px;transform:scaleX(0.9264);">ids3000</span>
<span style="left:366.80px;top:218px;font-size:9.8px;color:#4aae72;transform:scaleX(0.8835);text-decoration:underline;text-underline-offset:1px">10.3.0.35</span>
<span style="left:456.20px;top:218px;font-size:9.8px;transform:scaleX(0.9126);">Частные адреса</span>
<span style="left:584.20px;top:218px;font-size:9.8px;color:#4aae72;transform:scaleX(0.8835);text-decoration:underline;text-underline-offset:1px">10.3.0.33</span>
<span style="left:673.30px;top:218px;font-size:9.8px;transform:scaleX(0.7904);">TCP</span>
<span style="left:767.40px;top:218px;font-size:9.8px;transform:scaleX(0.9108);">900</span>
<span style="left:817.70px;top:218px;font-size:9.8px;transform:scaleX(0.8993);">PHP System Command in HTTP POST</span>
<span style="left:77.70px;top:245px;font-size:9.8px;transform:scaleX(0.9048);">15.05.2025 02:02:03.515</span>
<span style="left:200.80px;top:245px;font-size:10.4px;color:#fff;transform:scaleX(0.8910);">разрешить</span>
<span style="left:295.80px;top:245px;font-size:9.8px;transform:scaleX(0.9264);">ids3000</span>
<span style="left:366.80px;top:245px;font-size:9.8px;color:#4aae72;transform:scaleX(0.8835);text-decoration:underline;text-underline-offset:1px">10.3.0.35</span>
<span style="left:456.20px;top:245px;font-size:9.8px;transform:scaleX(0.9126);">Частные адреса</span>
<span style="left:584.20px;top:245px;font-size:9.8px;color:#4aae72;transform:scaleX(0.8835);text-decoration:underline;text-underline-offset:1px">10.3.0.33</span>
<span style="left:673.30px;top:245px;font-size:9.8px;transform:scaleX(0.7904);">TCP</span>
<span style="left:767.40px;top:245px;font-size:9.8px;transform:scaleX(0.9108);">900</span>
<span style="left:817.70px;top:245px;font-size:9.8px;transform:scaleX(0.8993);">PHP System Command in HTTP POST</span>
<span style="left:77.70px;top:271px;font-size:9.8px;transform:scaleX(0.9048);">15.05.2025 02:02:03.515</span>
<span style="left:200.80px;top:271px;font-size:10.4px;color:#fff;transform:scaleX(0.8910);">разрешить</span>
<span style="left:295.80px;top:271px;font-size:9.8px;transform:scaleX(0.9264);">ids3000</span>
<span style="left:366.80px;top:271px;font-size:9.8px;color:#4aae72;transform:scaleX(0.8835);text-decoration:underline;text-underline-offset:1px">10.3.0.35</span>
<span style="left:456.20px;top:271px;font-size:9.8px;transform:scaleX(0.9126);">Частные адреса</span>
<span style="left:584.20px;top:271px;font-size:9.8px;color:#4aae72;transform:scaleX(0.8835);text-decoration:underline;text-underline-offset:1px">10.3.0.33</span>
<span style="left:673.30px;top:271px;font-size:9.8px;transform:scaleX(0.7904);">TCP</span>
<span style="left:767.40px;top:271px;font-size:9.8px;transform:scaleX(0.9108);">900</span>
<span style="left:817.70px;top:271px;font-size:9.8px;transform:scaleX(0.9565);">jQuery-File-Upload &lt;= 9.22.0 - Unrestricted File Upload</span>
<span style="left:77.70px;top:297px;font-size:9.8px;transform:scaleX(0.9048);">15.05.2025 02:02:03.515</span>
<span style="left:200.80px;top:297px;font-size:10.4px;color:#fff;transform:scaleX(0.8910);">разрешить</span>
<span style="left:295.80px;top:297px;font-size:9.8px;transform:scaleX(0.9264);">ids3000</span>
<span style="left:366.80px;top:297px;font-size:9.8px;color:#4aae72;transform:scaleX(0.8835);text-decoration:underline;text-underline-offset:1px">10.3.0.35</span>
<span style="left:456.20px;top:297px;font-size:9.8px;transform:scaleX(0.9126);">Частные адреса</span>
<span style="left:584.20px;top:297px;font-size:9.8px;color:#4aae72;transform:scaleX(0.8835);text-decoration:underline;text-underline-offset:1px">10.3.0.33</span>
<span style="left:673.30px;top:297px;font-size:9.8px;transform:scaleX(0.7904);">TCP</span>
<span style="left:767.40px;top:297px;font-size:9.8px;transform:scaleX(0.9108);">900</span>
<span style="left:817.70px;top:297px;font-size:9.8px;transform:scaleX(0.9565);">jQuery-File-Upload &lt;= 9.22.0 - Unrestricted File Upload</span>
<span style="left:77.70px;top:323px;font-size:9.8px;transform:scaleX(0.9048);">15.05.2025 02:02:03.515</span>
<span style="left:200.80px;top:323px;font-size:10.4px;color:#fff;transform:scaleX(0.8910);">разрешить</span>
<span style="left:295.80px;top:323px;font-size:9.8px;transform:scaleX(0.9264);">ids3000</span>
<span style="left:366.80px;top:323px;font-size:9.8px;color:#4aae72;transform:scaleX(0.8835);text-decoration:underline;text-underline-offset:1px">10.3.0.35</span>
<span style="left:456.20px;top:323px;font-size:9.8px;transform:scaleX(0.9126);">Частные адреса</span>
<span style="left:584.20px;top:323px;font-size:9.8px;color:#4aae72;transform:scaleX(0.8835);text-decoration:underline;text-underline-offset:1px">10.3.0.33</span>
<span style="left:673.30px;top:323px;font-size:9.8px;transform:scaleX(0.7904);">TCP</span>
<span style="left:767.40px;top:323px;font-size:9.8px;transform:scaleX(0.9108);">900</span>
<span style="left:817.70px;top:323px;font-size:9.8px;transform:scaleX(0.9512);">jQuery-File-Upload 9.22.0 - Arbitrary File Upload</span>
<span style="left:77.70px;top:349px;font-size:9.8px;transform:scaleX(0.9048);">15.05.2025 02:02:03.515</span>
<span style="left:200.80px;top:349px;font-size:10.4px;color:#fff;transform:scaleX(0.8910);">разрешить</span>
<span style="left:295.80px;top:349px;font-size:9.8px;transform:scaleX(0.9264);">ids3000</span>
<span style="left:366.80px;top:349px;font-size:9.8px;color:#4aae72;transform:scaleX(0.8835);text-decoration:underline;text-underline-offset:1px">10.3.0.35</span>
<span style="left:456.20px;top:349px;font-size:9.8px;transform:scaleX(0.9126);">Частные адреса</span>
<span style="left:584.20px;top:349px;font-size:9.8px;color:#4aae72;transform:scaleX(0.8835);text-decoration:underline;text-underline-offset:1px">10.3.0.33</span>
<span style="left:673.30px;top:349px;font-size:9.8px;transform:scaleX(0.7904);">TCP</span>
<span style="left:767.40px;top:349px;font-size:9.8px;transform:scaleX(0.9108);">900</span>
<span style="left:817.70px;top:349px;font-size:9.8px;transform:scaleX(0.9512);">jQuery-File-Upload 9.22.0 - Arbitrary File Upload</span>
<span style="left:77.70px;top:375px;font-size:9.8px;transform:scaleX(0.9048);">15.05.2025 02:02:02.636</span>
<span style="left:200.80px;top:375px;font-size:10.4px;color:#fff;transform:scaleX(0.8910);">разрешить</span>
<span style="left:295.80px;top:375px;font-size:9.8px;transform:scaleX(0.9264);">ids3000</span>
<span style="left:366.80px;top:375px;font-size:9.8px;color:#4aae72;transform:scaleX(0.8835);text-decoration:underline;text-underline-offset:1px">10.3.0.35</span>
<span style="left:456.20px;top:375px;font-size:9.8px;transform:scaleX(0.9126);">Частные адреса</span>
<span style="left:584.20px;top:375px;font-size:9.8px;color:#4aae72;transform:scaleX(0.8835);text-decoration:underline;text-underline-offset:1px">10.3.0.33</span>
<span style="left:673.30px;top:375px;font-size:9.8px;transform:scaleX(0.7904);">TCP</span>
<span style="left:767.40px;top:375px;font-size:9.8px;transform:scaleX(0.9267);">8082</span>
<span style="left:817.70px;top:375px;font-size:9.8px;transform:scaleX(0.9502);">Onmouseover= in URI - Likely Cross Site Scripting Attempt</span>
<span style="left:77.70px;top:401px;font-size:9.8px;transform:scaleX(0.9048);">15.05.2025 02:02:02.636</span>
<span style="left:200.80px;top:401px;font-size:10.4px;color:#fff;transform:scaleX(0.8910);">разрешить</span>
<span style="left:295.80px;top:401px;font-size:9.8px;transform:scaleX(0.9264);">ids3000</span>
<span style="left:366.80px;top:401px;font-size:9.8px;color:#4aae72;transform:scaleX(0.8835);text-decoration:underline;text-underline-offset:1px">10.3.0.35</span>
<span style="left:456.20px;top:401px;font-size:9.8px;transform:scaleX(0.9126);">Частные адреса</span>
<span style="left:584.20px;top:401px;font-size:9.8px;color:#4aae72;transform:scaleX(0.8835);text-decoration:underline;text-underline-offset:1px">10.3.0.33</span>
<span style="left:673.30px;top:401px;font-size:9.8px;transform:scaleX(0.7904);">TCP</span>
<span style="left:767.40px;top:401px;font-size:9.8px;transform:scaleX(0.9267);">8082</span>
<span style="left:817.70px;top:401px;font-size:9.8px;transform:scaleX(0.9502);">Onmouseover= in URI - Likely Cross Site Scripting Attempt</span>
<span style="left:77.70px;top:427px;font-size:9.8px;transform:scaleX(0.9048);">15.05.2025 02:02:01.961</span>
<span style="left:200.80px;top:427px;font-size:10.4px;color:#fff;transform:scaleX(0.8910);">разрешить</span>
<span style="left:295.80px;top:427px;font-size:9.8px;transform:scaleX(0.9264);">ids3000</span>
<span style="left:366.80px;top:427px;font-size:9.8px;color:#4aae72;transform:scaleX(0.8835);text-decoration:underline;text-underline-offset:1px">10.3.0.35</span>
<span style="left:456.20px;top:427px;font-size:9.8px;transform:scaleX(0.9126);">Частные адреса</span>
<span style="left:584.20px;top:427px;font-size:9.8px;color:#4aae72;transform:scaleX(0.8835);text-decoration:underline;text-underline-offset:1px">10.3.0.33</span>
<span style="left:673.30px;top:427px;font-size:9.8px;transform:scaleX(0.7904);">TCP</span>
<span style="left:767.40px;top:427px;font-size:9.8px;transform:scaleX(0.9267);">8082</span>
<span style="left:817.70px;top:427px;font-size:9.8px;transform:scaleX(0.9328);">Fortra FileCatalyst Workflow Unauthenticated SQLi (CVE-2024-5276)</span>
<span style="left:77.70px;top:453px;font-size:9.8px;transform:scaleX(0.9048);">15.05.2025 02:02:01.961</span>
<span style="left:200.80px;top:453px;font-size:10.4px;color:#fff;transform:scaleX(0.8910);">разрешить</span>
<span style="left:295.80px;top:453px;font-size:9.8px;transform:scaleX(0.9264);">ids3000</span>
<span style="left:366.80px;top:453px;font-size:9.8px;color:#4aae72;transform:scaleX(0.8835);text-decoration:underline;text-underline-offset:1px">10.3.0.35</span>
<span style="left:456.20px;top:453px;font-size:9.8px;transform:scaleX(0.9126);">Частные адреса</span>
<span style="left:584.20px;top:453px;font-size:9.8px;color:#4aae72;transform:scaleX(0.8835);text-decoration:underline;text-underline-offset:1px">10.3.0.33</span>
<span style="left:673.30px;top:453px;font-size:9.8px;transform:scaleX(0.7904);">TCP</span>
<span style="left:767.40px;top:453px;font-size:9.8px;transform:scaleX(0.9267);">8082</span>
<span style="left:817.70px;top:453px;font-size:9.8px;transform:scaleX(0.9328);">Fortra FileCatalyst Workflow Unauthenticated SQLi (CVE-2024-5276)</span>
<span style="left:77.70px;top:479px;font-size:9.8px;transform:scaleX(0.9048);">15.05.2025 02:02:01.845</span>
<span style="left:200.80px;top:479px;font-size:10.4px;color:#fff;transform:scaleX(0.8910);">разрешить</span>
<span style="left:295.80px;top:479px;font-size:9.8px;transform:scaleX(0.9264);">ids3000</span>
<span style="left:366.80px;top:479px;font-size:9.8px;color:#4aae72;transform:scaleX(0.8835);text-decoration:underline;text-underline-offset:1px">10.3.0.35</span>
<span style="left:456.20px;top:479px;font-size:9.8px;transform:scaleX(0.9126);">Частные адреса</span>
<span style="left:584.20px;top:479px;font-size:9.8px;color:#4aae72;transform:scaleX(0.8835);text-decoration:underline;text-underline-offset:1px">10.3.0.33</span>
<span style="left:673.30px;top:479px;font-size:9.8px;transform:scaleX(0.7904);">TCP</span>
<span style="left:767.40px;top:479px;font-size:9.8px;transform:scaleX(0.9267);">8082</span>
<span style="left:817.70px;top:479px;font-size:9.8px;transform:scaleX(0.9203);">AiOPMSD Final 1.0.0 - SQL Injection</span>
<span style="left:77.70px;top:505px;font-size:9.8px;transform:scaleX(0.9048);">15.05.2025 02:02:01.845</span>
<span style="left:200.80px;top:505px;font-size:10.4px;color:#fff;transform:scaleX(0.8910);">разрешить</span>
<span style="left:295.80px;top:505px;font-size:9.8px;transform:scaleX(0.9264);">ids3000</span>
<span style="left:366.80px;top:505px;font-size:9.8px;color:#4aae72;transform:scaleX(0.8835);text-decoration:underline;text-underline-offset:1px">10.3.0.35</span>
<span style="left:456.20px;top:505px;font-size:9.8px;transform:scaleX(0.9126);">Частные адреса</span>
<span style="left:584.20px;top:505px;font-size:9.8px;color:#4aae72;transform:scaleX(0.8835);text-decoration:underline;text-underline-offset:1px">10.3.0.33</span>
<span style="left:673.30px;top:505px;font-size:9.8px;transform:scaleX(0.7904);">TCP</span>
<span style="left:767.40px;top:505px;font-size:9.8px;transform:scaleX(0.9267);">8082</span>
<span style="left:817.70px;top:505px;font-size:9.8px;transform:scaleX(0.9203);">AiOPMSD Final 1.0.0 - SQL Injection</span>
<span style="left:77.70px;top:531px;font-size:9.8px;transform:scaleX(0.9048);">15.05.2025 02:02:01.845</span>
<span style="left:200.80px;top:531px;font-size:10.4px;color:#fff;transform:scaleX(0.8910);">разрешить</span>
<span style="left:295.80px;top:531px;font-size:9.8px;transform:scaleX(0.9264);">ids3000</span>
<span style="left:366.80px;top:531px;font-size:9.8px;color:#4aae72;transform:scaleX(0.8835);text-decoration:underline;text-underline-offset:1px">10.3.0.35</span>
<span style="left:456.20px;top:531px;font-size:9.8px;transform:scaleX(0.9126);">Частные адреса</span>
<span style="left:584.20px;top:531px;font-size:9.8px;color:#4aae72;transform:scaleX(0.8835);text-decoration:underline;text-underline-offset:1px">10.3.0.33</span>
<span style="left:673.30px;top:531px;font-size:9.8px;transform:scaleX(0.7904);">TCP</span>
<span style="left:767.40px;top:531px;font-size:9.8px;transform:scaleX(0.9267);">8082</span>
<span style="left:817.70px;top:531px;font-size:9.8px;transform:scaleX(0.9313);">Suspicious Generic - Single Quote based SQL Injection in URI</span>
<span style="left:77.60px;top:569px;font-size:9.6px;transform:scaleX(0.8982);">1</span>
<span style="left:130.80px;top:569px;font-size:9.6px;transform:scaleX(0.9357);">3</span>
<span style="left:157.40px;top:569px;font-size:9.6px;transform:scaleX(1.0105);">4</span>
<span style="left:184.40px;top:569px;font-size:9.6px;font-weight:700;color:#129c33;transform:scaleX(0.9731);">5</span>
<span style="left:211.30px;top:569px;font-size:9.6px;transform:scaleX(0.9731);">6</span>
<span style="left:238.20px;top:569px;font-size:9.6px;transform:scaleX(0.9357);">7</span>
<span style="left:289.90px;top:569px;font-size:9.6px;transform:scaleX(0.9745);">10</span>
<span style="left:351.00px;top:569px;font-size:9.6px;transform:scaleX(0.9505);">25 / стр.</span>
<span style="left:411.00px;top:569px;font-size:9.6px;transform:scaleX(0.9383);">Страница</span>
<span style="left:506.60px;top:569px;font-size:9.6px;transform:scaleX(0.9680);">Перейти</span>
<svg style="left:0;top:0" width="1148" height="589" viewBox="0 0 1148 589"><path fill-rule="evenodd" fill="#d8d8d8" d="M0 0H1148V589H0ZM2.0 2.0V587.0H1146.1V2.0Z"/></svg>
</div></body></html>
